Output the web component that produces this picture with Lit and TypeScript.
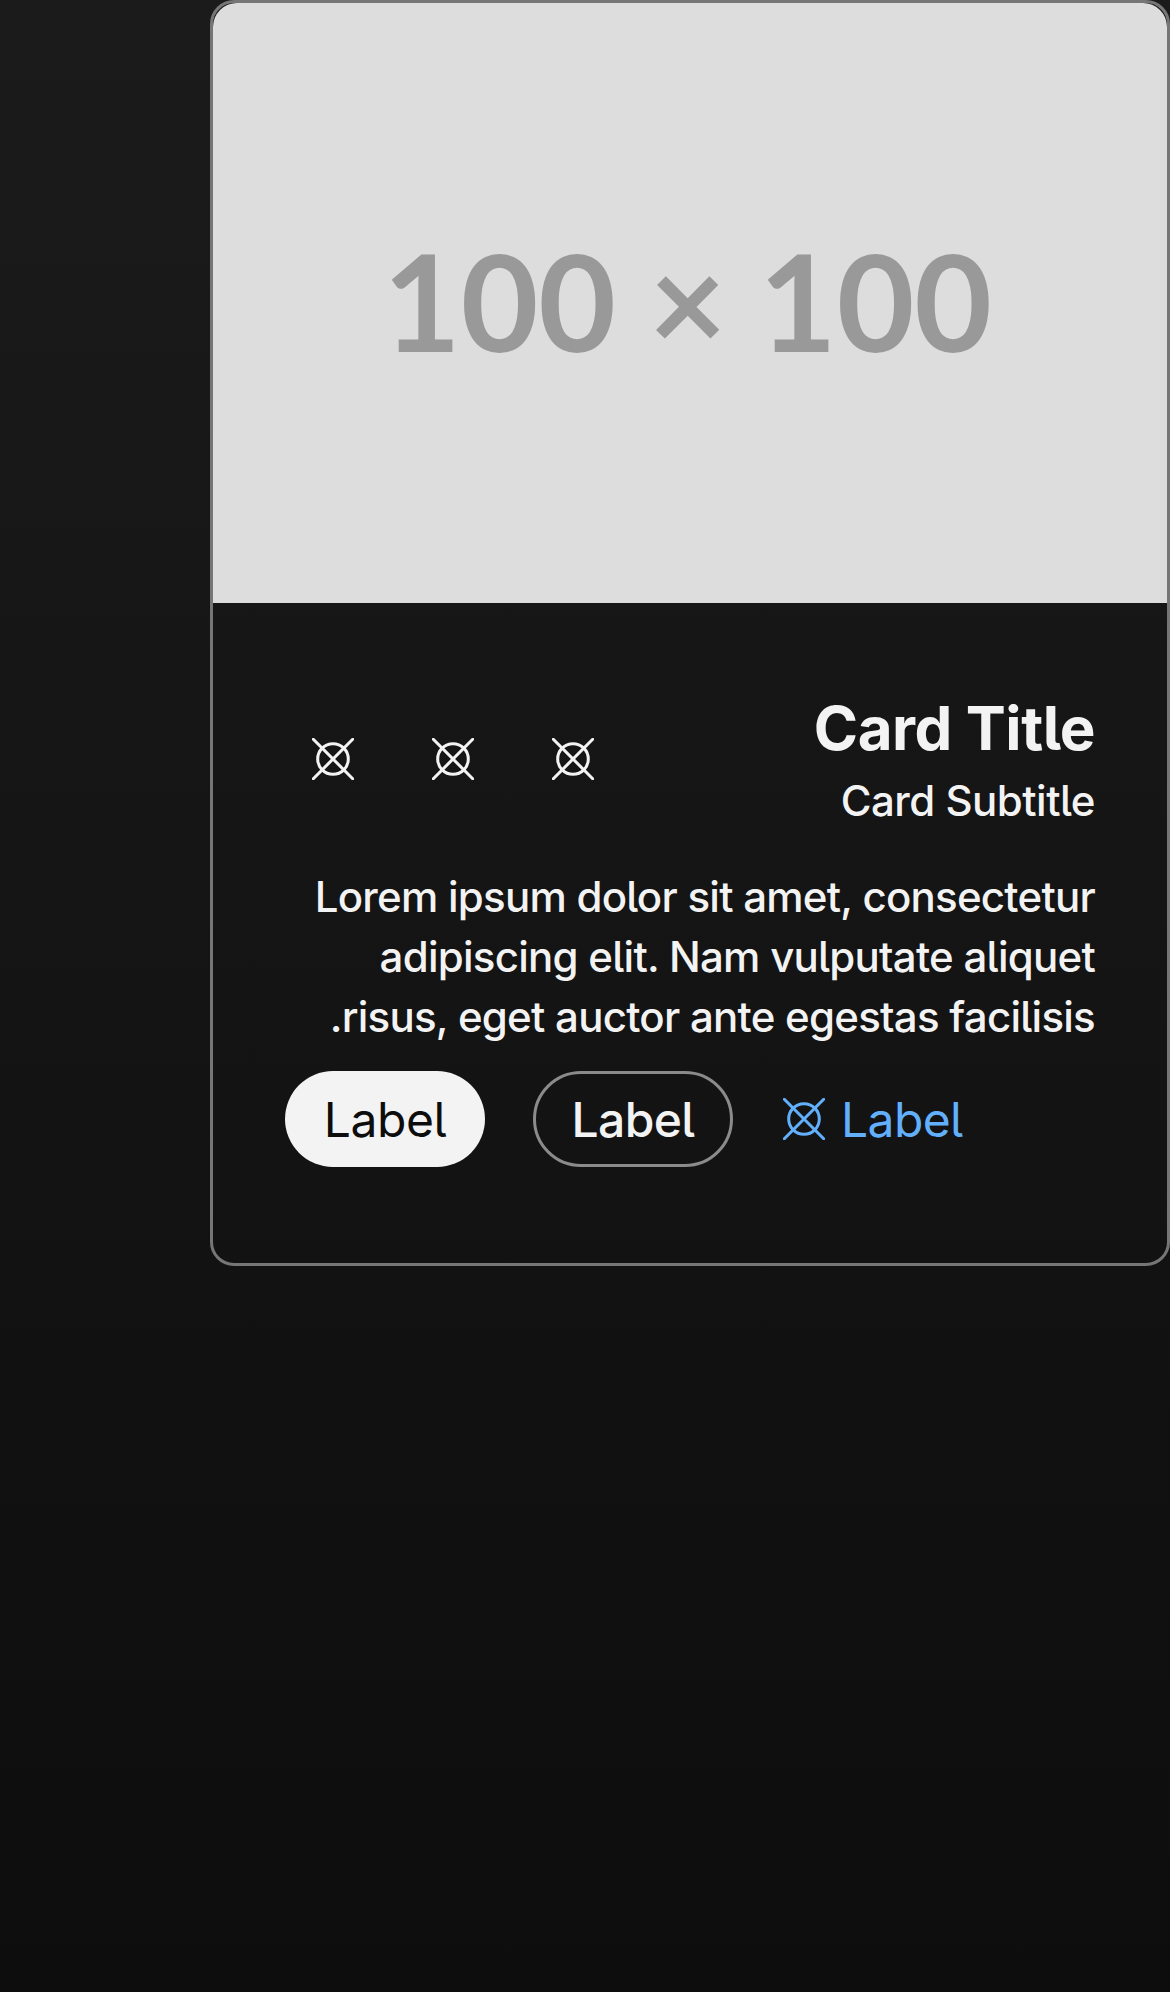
import { LitElement, html, css } from "lit";
import { customElement } from "lit/decorators.js";

const icon = html`<svg class="icon" viewBox="3 3 42 42" width="42" height="42" fill="none" stroke="currentColor" stroke-width="3" stroke-linecap="round">
  <circle cx="24" cy="24" r="15.3"></circle>
  <path d="M4.3 4.3 43.7 43.7M43.7 4.3 4.3 43.7"></path>
</svg>`;

@customElement("app-root")
export class AppRoot extends LitElement {
  static styles = css`
    :host {
      display: flex;
      justify-content: flex-end;
      align-items: flex-start;
      box-sizing: border-box;
      height: 1992px;
      background: linear-gradient(#1b1b1b, #0d0d0d);
      font-family: Inter, sans-serif;
      font-feature-settings: "cv05";
      color: #f3f3f3;
    }
    .card {
      box-sizing: border-box;
      width: 960px;
      height: 1266px;
      border: 3px solid #767676;
      border-radius: 24px;
      overflow: hidden;
    }
    .media {
      box-sizing: border-box;
      height: 600px;
      padding: 0 5px 4px 0;
      display: flex;
      align-items: center;
      justify-content: center;
      border-radius: 24px 24px 0 0;
      background: #ddd;
      color: #999;
      font: 700 134px/160px Lato, sans-serif;
      white-space: nowrap;
    }
    .body {
      padding: 84px 72px 0;
    }
    .header {
      display: flex;
      align-items: center;
      justify-content: space-between;
    }
    .actions {
      display: flex;
    }
    .action {
      width: 120px;
      height: 120px;
      display: flex;
      align-items: center;
      justify-content: center;
      margin-left: -12px;
      margin-right: 12px;
    }
    .icon {
      display: block;
    }
    .titles {
      text-align: right;
    }
    .title {
      font-size: 60px;
      line-height: 82px;
      font-weight: 700;
      letter-spacing: -0.45px;
    }
    .subtitle {
      margin-top: 2px;
      font-size: 42px;
      line-height: 60px;
      font-weight: 500;
      letter-spacing: -0.5px;
    }
    .text {
      margin: 36px 0 0;
      font-size: 42px;
      line-height: 60px;
      font-weight: 500;
      letter-spacing: -0.74px;
      direction: rtl;
      text-align: right;
    }
    .buttons {
      display: flex;
      gap: 48px;
      margin-top: 24px;
    }
    .btn {
      box-sizing: border-box;
      height: 96px;
      width: 200px;
      display: flex;
      align-items: center;
      justify-content: center;
      border-radius: 48px;
      font-size: 48px;
      letter-spacing: -0.4px;
    }
    .filled {
      background: #f3f3f3;
      color: #0d0d0d;
    }
    .outline {
      border: 3px solid #8b8b8b;
      font-weight: 500;
      letter-spacing: -0.6px;
    }
    .link {
      justify-content: flex-start;
      gap: 16px;
      padding-left: 2px;
      color: #62b0fb;
      letter-spacing: -0.6px;
    }
  `;

  render() {
    return html`
      <article class="card">
        <div class="media">100 × 100</div>
        <div class="body">
          <div class="header">
            <div class="actions">
              ${[0, 1, 2].map(() => html`<div class="action">${icon}</div>`)}
            </div>
            <div class="titles">
              <div class="title">Card Title</div>
              <div class="subtitle">Card Subtitle</div>
            </div>
          </div>
          <p class="text">Lorem ipsum dolor sit amet, consectetur adipiscing elit. Nam vulputate aliquet risus, eget auctor ante egestas facilisis.</p>
          <div class="buttons">
            <div class="btn filled">Label</div>
            <div class="btn outline">Label</div>
            <div class="btn link">${icon}<span>Label</span></div>
          </div>
        </div>
      </article>
    `;
  }
}
